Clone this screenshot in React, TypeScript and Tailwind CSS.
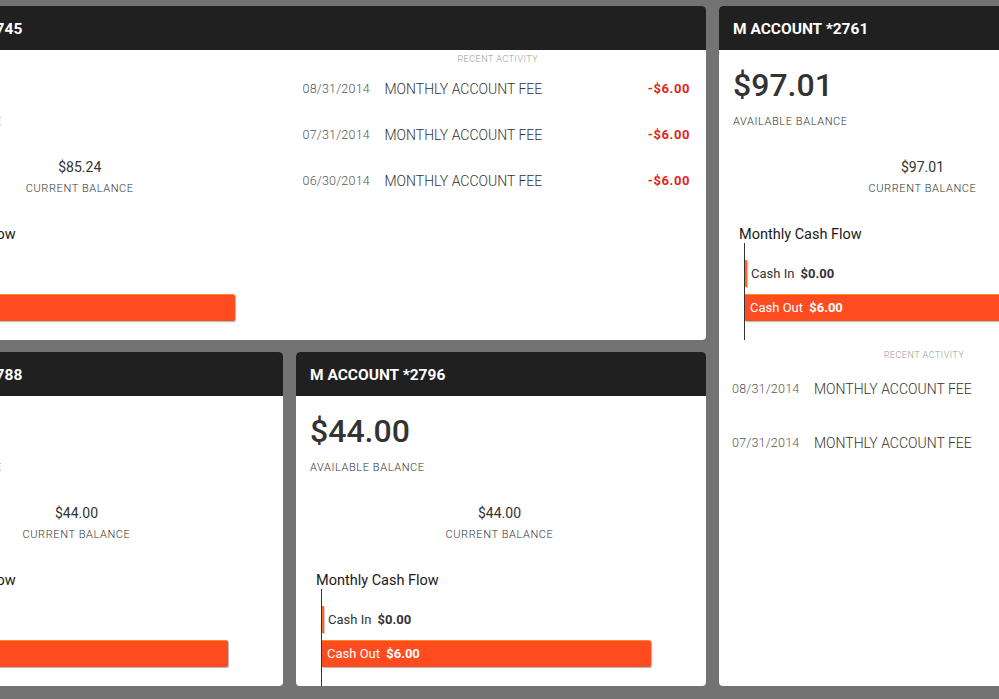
import React from 'react';

type Activity = { date: string; desc: string; amount: string };

type Account = {
  id: string;
  available: string;
  current: string;
  cashIn: string;
  cashOut: string;
  activity: Activity[];
};

const fee = (date: string): Activity => ({ date, desc: 'MONTHLY ACCOUNT FEE', amount: '-$6.00' });

const accounts: Record<string, Account> = {
  a2745: {
    id: '2745',
    available: '$85.24',
    current: '$85.24',
    cashIn: '$0.00',
    cashOut: '$6.00',
    activity: [fee('08/31/2014'), fee('07/31/2014'), fee('06/30/2014')],
  },
  a2761: {
    id: '2761',
    available: '$97.01',
    current: '$97.01',
    cashIn: '$0.00',
    cashOut: '$6.00',
    activity: [fee('08/31/2014'), fee('07/31/2014')],
  },
  a2788: { id: '2788', available: '$44.00', current: '$44.00', cashIn: '$0.00', cashOut: '$6.00', activity: [] },
  a2796: { id: '2796', available: '$44.00', current: '$44.00', cashIn: '$0.00', cashOut: '$6.00', activity: [] },
};

function Header({ id }: { id: string }) {
  return (
    <div className="h-[44px] shrink-0 bg-[#202020] px-[14px] pt-[4px] flex items-center text-[15.5px] font-bold text-white">
      M ACCOUNT *{id}
    </div>
  );
}

function Summary({ acct }: { acct: Account }) {
  return (
    <div className="h-[290px] flex flex-col">
      <div className="px-[14px]">
        <p className="mt-[16px] text-[32px] leading-[38px] font-medium text-[#333]">{acct.available}</p>
        <p className="mt-[11px] text-[11px] leading-[13px] font-light tracking-[0.6px] text-[#333]">AVAILABLE BALANCE</p>
      </div>
      <div className="mt-[31px] pr-[3px] text-center">
        <p className="text-[14px] leading-[16px] text-[#333]">{acct.current}</p>
        <p className="mt-[7px] text-[11px] leading-[13px] font-light tracking-[0.6px] text-[#333]">CURRENT BALANCE</p>
      </div>
      <p className="mt-[32px] ml-[20px] text-[14.5px] leading-[16px] text-[#1a1a1a]">Monthly Cash Flow</p>

      {/* chart */}
      <div className="ml-[25px] mr-[55px] flex-1 border-l border-[#333] pt-[17px] flex flex-col gap-[7px]">
        <div className="h-[27px] flex items-center">
          <div className="h-full w-[2px] bg-[#ff6a1f] shadow-[1px_1px_1px_rgba(0,0,0,0.25)]" />
          <span className="ml-[4px] text-[13px] text-[#333] whitespace-nowrap">
            Cash In <b className="ml-[3px] font-bold">{acct.cashIn}</b>
          </span>
        </div>
        <div className="h-[27px] w-full flex items-center rounded-r-[2px] border-t border-[#ff8c1f] bg-[#ff4b20] pl-[5px] shadow-[1px_1px_1px_rgba(0,0,0,0.3)]">
          <span className="text-[13px] text-white whitespace-nowrap">
            Cash Out <b className="ml-[3px] font-bold">{acct.cashOut}</b>
          </span>
        </div>
      </div>
    </div>
  );
}

function Activity({ rows, rowH }: { rows: Activity[]; rowH: string }) {
  return (
    <div>
      <p className="text-center text-[9px] leading-[11px] font-light tracking-[0.5px] text-[#999]">RECENT ACTIVITY</p>
      <div className="mt-[1px]">
        {rows.map((r, i) => (
          <div key={i} className={`${rowH} flex items-center pl-[13px] pr-[16px]`}>
            <span className="w-[82px] shrink-0 text-[12.5px] font-light tracking-[0.2px] text-[#555]">{r.date}</span>
            <span className="flex-1 whitespace-nowrap text-[14px] font-light text-[#333]">{r.desc}</span>
            <span className="text-[13px] font-bold tracking-[0.6px] text-[#e3241b]">{r.amount}</span>
          </div>
        ))}
      </div>
    </div>
  );
}

export default function App() {
  const wide = accounts.a2745;
  const tall = accounts.a2761;

  return (
    <div className="h-[699px] w-[999px] overflow-hidden bg-[#737373] font-['Roboto','Liberation_Sans',sans-serif]">
      <div className="ml-[-127px] pt-[6px] grid w-max grid-cols-[410px_410px_410px] grid-rows-[334px_334px] gap-x-[13px] gap-y-[12px]">
        {/* wide card */}
        <div className="col-span-2 flex flex-col overflow-hidden rounded-[4px] bg-white">
          <Header id={wide.id} />
          <div className="grid flex-1 grid-cols-2">
            <Summary acct={wide} />
            <div className="pt-[4px]">
              <Activity rows={wide.activity} rowH="h-[46px]" />
            </div>
          </div>
        </div>

        {/* tall card */}
        <div className="row-span-2 flex flex-col overflow-hidden rounded-[4px] bg-white">
          <Header id={tall.id} />
          <Summary acct={tall} />
          <div className="mt-[10px]">
            <Activity rows={tall.activity} rowH="h-[54px]" />
          </div>
        </div>

        {[accounts.a2788, accounts.a2796].map(a => (
          <div key={a.id} className="flex flex-col overflow-hidden rounded-[4px] bg-white">
            <Header id={a.id} />
            <Summary acct={a} />
          </div>
        ))}
      </div>
    </div>
  );
}
